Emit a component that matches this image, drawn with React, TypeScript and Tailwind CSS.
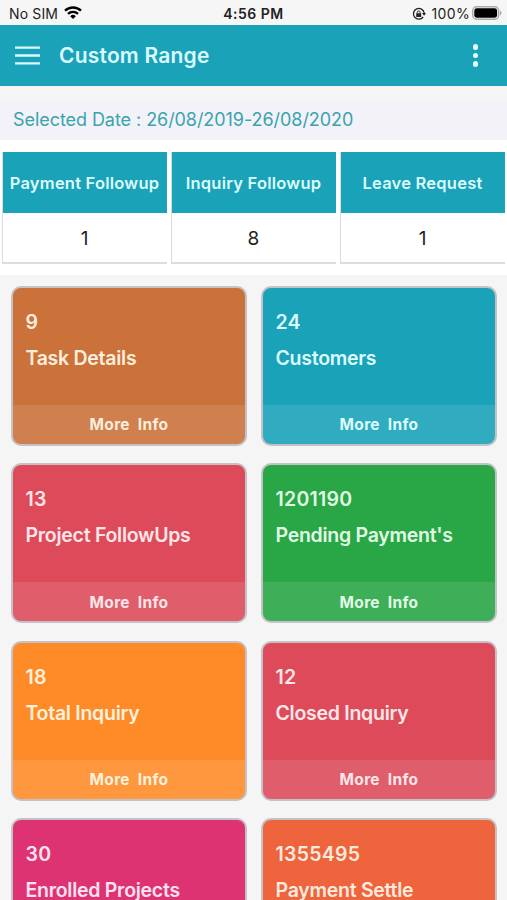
import clsx from "clsx";

const summary = [
  { title: "Payment Followup", value: 1 },
  { title: "Inquiry Followup", value: 8 },
  { title: "Leave Request", value: 1 },
];

const cards = [
  { count: 9, title: "Task Details", color: "bg-[#cb723b]", text: "text-[#fdeedd]" },
  { count: 24, title: "Customers", color: "bg-[#19a2b8]", text: "text-[#dcfbff]" },
  { count: 13, title: "Project FollowUps", color: "bg-[#dd4b5a]", text: "text-[#ffe6e8]" },
  { count: 1201190, title: "Pending Payment's", color: "bg-[#29a645]", text: "text-[#e2fbe6]" },
  { count: 18, title: "Total Inquiry", color: "bg-[#fe8b27]", text: "text-[#fff1dc]" },
  { count: 12, title: "Closed Inquiry", color: "bg-[#dd4b5a]", text: "text-[#ffe6e8]" },
  { count: 30, title: "Enrolled Projects", color: "bg-[#dd3372]", text: "text-[#ffe2ef]" },
  { count: 1355495, title: "Payment Settle", color: "bg-[#ed643d]", text: "text-[#ffeadf]" },
];

const StatusBar = () => {
  return (
    <div className="grid h-[25px] shrink-0 grid-cols-3 items-center bg-[#f6f6f6] pt-[2px] text-[14px] text-[#222]">
      <div className="flex items-center pl-[9px]">
        <span className="tracking-[0.15px]">No SIM</span>
        <svg className="-mt-[2px] ml-[6px] h-[13px] w-[18px]" viewBox="0 0 18 13" fill="none" stroke="#000" strokeWidth="2.4">
          <path d="M1 4.7a11.5 11.5 0 0 1 16 0" />
          <path d="M4 7.9a7.2 7.2 0 0 1 10 0" />
          <path d="M9 13 6.2 10.2a4 4 0 0 1 5.6 0z" fill="#000" stroke="none" />
        </svg>
      </div>
      <span className="text-center font-semibold tracking-[0.5px]">4:56 PM</span>
      <div className="flex items-center justify-end pr-[5px]">
        <svg className="mr-[5px] h-[14px] w-[14px]" viewBox="0 0 14 14" fill="none" stroke="#222" strokeWidth="1.3">
          <path d="M11.2 10A5.4 5.4 0 1 1 12.2 6" />
          <path d="M10 6h4l-1.9 2.8z" fill="#222" stroke="none" />
          <path d="M4.2 6.3h5v3.7h-5z" fill="#222" stroke="none" />
          <path d="M5.3 6.8V5.3a1.4 1.4 0 0 1 2.8 0v1.5" strokeWidth="1" />
        </svg>
        <span className="tracking-[0.35px]">100%</span>
        <svg className="-mt-[1px] ml-[2px] h-[14px] w-[30px]" viewBox="0 0 30 14">
          <rect x="0.7" y="0.7" width="26" height="12.6" rx="4" fill="#f6f6f6" stroke="#aaa" strokeWidth="1.4" />
          <rect x="2.3" y="2.3" width="22.8" height="9.4" rx="2.4" fill="#000" />
          <path d="M28 4.7c2 .8 2 3.8 0 4.6z" fill="#aaa" />
        </svg>
      </div>
    </div>
  );
};

const Header = () => {
  return (
    <div className="flex h-[61px] shrink-0 items-center bg-[#19a2b8] text-[#dcfbff]">
      <svg className="ml-[15px] h-[19px] w-[25px]" viewBox="0 0 25 19" fill="currentColor">
        <path d="M0 .4h25v2.4H0zM0 8.3h25v2.4H0zM0 16.2h25v2.4H0z" />
      </svg>
      <h1 className="mt-px ml-[19px] flex-1 text-[21px] font-semibold tracking-[0.2px]">Custom Range</h1>
      <div className="mr-[29px] flex flex-col gap-[3px]">
        <span className="size-[5.5px] rounded-full bg-[#e6fdff]"></span>
        <span className="size-[5.5px] rounded-full bg-[#e6fdff]"></span>
        <span className="size-[5.5px] rounded-full bg-[#e6fdff]"></span>
      </div>
    </div>
  );
};

const App = () => {
  return (
    <div className="flex h-[900px] w-[507px] flex-col overflow-hidden bg-[#f5f5f5] font-['Inter',sans-serif]">
      <StatusBar />
      <Header />
      <div className="mt-[13px] flex h-[41px] shrink-0 items-center bg-[#f2f2f8] pl-[13px] text-[18px] tracking-[-0.06px] text-[#3aa3ae]">
        Selected Date : 26/08/2019-26/08/2020
      </div>
      <div className="flex h-[135px] shrink-0 gap-[4px] bg-white pt-[12px] pr-[2px] pl-[2px]">
        {summary.map((item) => (
          <div key={item.title} className="flex h-[112px] flex-1 flex-col border-b-2 border-l border-[#dcdcdc]">
            <div className="flex h-[61px] items-center justify-center bg-[#19a2b8] pt-[2px] pr-px text-[16.5px] font-semibold tracking-[0.22px] whitespace-nowrap text-[#dcfbff]">
              {item.title}
            </div>
            <div className="flex flex-1 items-center justify-center pt-[3px] pr-px text-[19px] text-[#222]">
              {item.value}
            </div>
          </div>
        ))}
      </div>
      <div className="mt-[11px] grid grid-cols-2 gap-x-[14px] gap-y-[17.3px] pr-[10px] pl-[11px]">
        {cards.map((card) => (
          <div
            key={card.title}
            className={clsx(
              "flex h-[160px] flex-col overflow-hidden rounded-[10px] border-2 border-[#c4c2c6]",
              card.color,
              card.text
            )}
          >
            <div className="flex-1 pt-[22px] pl-[12.5px] text-[19.5px] leading-[24px] font-semibold whitespace-nowrap">
              <div className="tracking-[0.25px]">{card.count}</div>
              <div className="mt-[12px] tracking-[-0.27px]">{card.title}</div>
            </div>
            <div className="flex h-[39px] items-center justify-center bg-white/10 pt-px text-[15.5px] font-bold tracking-[0.3px] whitespace-pre">
              More  Info
            </div>
          </div>
        ))}
      </div>
    </div>
  );
};
export default App;
